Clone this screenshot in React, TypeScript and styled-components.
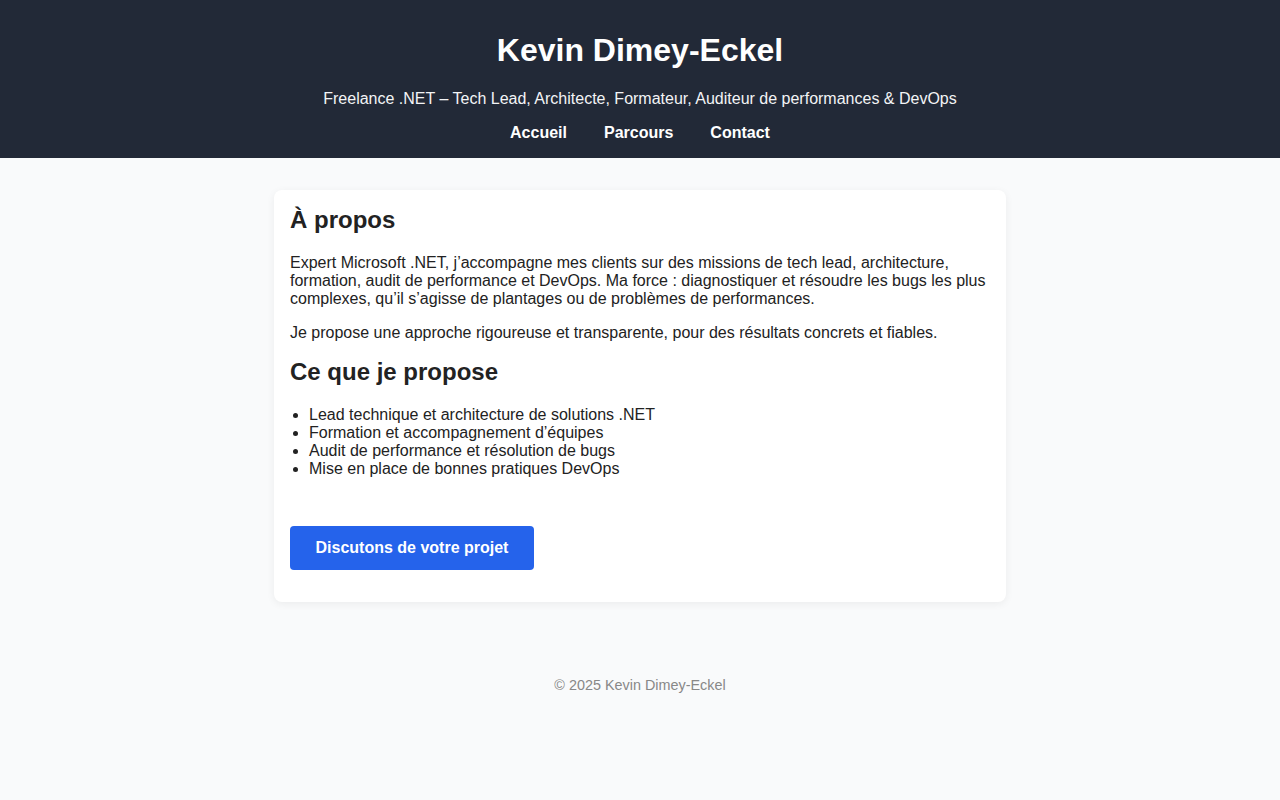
import React from 'react';
import styled, { createGlobalStyle } from 'styled-components';

const GlobalStyle = createGlobalStyle`
  html, body {
    margin: 0;
    padding: 0;
  }
  body {
    font-family: "Liberation Sans", Arial, sans-serif;
    font-size: 16px;
    background-color: #f9fafb;
    color: #222222;
  }
`;

const Header = styled.header`
  background-color: #222937;
  color: #ffffff;
  text-align: center;
  padding: 32px 16px 16px;
`;

const Title = styled.h1`
  margin: 0 0 21px;
  font-size: 32px;
  font-weight: bold;
`;

const Subtitle = styled.p`
  margin: 0 0 16px;
  font-size: 16px;
  color: #f3f4f6;
`;

const Nav = styled.nav`
  display: flex;
  justify-content: center;
  gap: 37px;
`;

const NavLink = styled.a`
  color: #ffffff;
  font-weight: bold;
  text-decoration: none;
`;

const Main = styled.main`
  padding: 32px 16px 0;
`;

const Card = styled.section`
  max-width: 700px;
  margin: 0 auto;
  background: #ffffff;
  border-radius: 8px;
  box-shadow: 0 2px 8px rgba(0, 0, 0, 0.06);
  padding: 16px 16px 0;
`;

const Heading = styled.h2<{ $first?: boolean }>`
  font-size: 24px;
  font-weight: bold;
  margin: ${(p) => (p.$first ? '0' : '16px')} 0 20px;
  line-height: 28px;
`;

const Paragraph = styled.p`
  margin: 0 0 16px;
  line-height: 18px;
`;

const List = styled.ul`
  margin: 0 0 16px;
  padding-left: 19px;
  line-height: 18px;
`;

const CtaRow = styled.div`
  padding: 32px 0 32px;
`;

const CtaButton = styled.a`
  display: inline-block;
  background-color: #2563eb;
  color: #ffffff;
  font-weight: bold;
  text-decoration: none;
  padding: 13px 25.5px;
  line-height: 18px;
  border-radius: 4px;
`;

const Footer = styled.footer`
  text-align: center;
  color: #888888;
  font-size: 14.4px;
  padding: 75px 16px 32px;
`;

const services = [
  'Lead technique et architecture de solutions .NET',
  'Formation et accompagnement d\u2019\u00e9quipes',
  'Audit de performance et r\u00e9solution de bugs',
  'Mise en place de bonnes pratiques DevOps',
];

const App: React.FC = () => {
  return (
    <div>
      <GlobalStyle />
      <Header>
        <Title>Kevin Dimey-Eckel</Title>
        <Subtitle>
          Freelance .NET – Tech Lead, Architecte, Formateur, Auditeur de performances &amp; DevOps
        </Subtitle>
        <Nav>
          <NavLink href="#">Accueil</NavLink>
          <NavLink href="#">Parcours</NavLink>
          <NavLink href="#">Contact</NavLink>
        </Nav>
      </Header>

      <Main>
        <Card>
          <Heading $first>À propos</Heading>
          <Paragraph>
            Expert Microsoft .NET, j’accompagne mes clients sur des missions de tech lead, architecture,
            formation, audit de performance et DevOps. Ma force&nbsp;: diagnostiquer et résoudre les bugs les plus
            complexes, qu’il s’agisse de plantages ou de problèmes de performances.
          </Paragraph>
          <Paragraph>
            Je propose une approche rigoureuse et transparente, pour des résultats concrets et fiables.
          </Paragraph>

          <Heading>Ce que je propose</Heading>
          <List>
            {services.map((s) => (
              <li key={s}>{s}</li>
            ))}
          </List>

          <CtaRow>
            <CtaButton href="#">Discutons de votre projet</CtaButton>
          </CtaRow>
        </Card>
      </Main>

      <Footer>© 2025 Kevin Dimey-Eckel</Footer>
    </div>
  );
};

export default App;
